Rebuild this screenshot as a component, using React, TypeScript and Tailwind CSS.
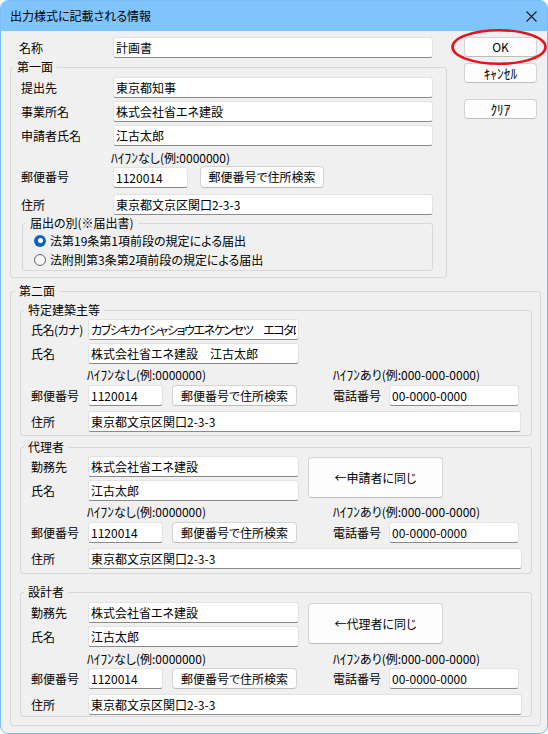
import React from "react";

const inp =
  "box-border h-[21px] bg-white border border-[#e2e2e2] border-b-[#8a8a8a] rounded-[3px] px-[2px] text-[12px] leading-[19px] text-black outline-none";
const btn =
  "box-border bg-[#fdfdfd] border border-[#d3d3d3] border-b-[#bdbdbd] rounded-[4px] text-[12px] leading-[16px] text-black flex items-center justify-center whitespace-nowrap";
const fs = "border border-[#d8d8d8] rounded-[3px] min-w-0";

function Input({ value, className }: { value: string; className: string }) {
  return <input readOnly value={value} className={`${inp} ${className}`} />;
}

function Radio({ checked, label }: { checked: boolean; label: string }) {
  return (
    <div className="flex items-center h-[19px] pl-[11px]">
      {checked ? (
        <span className="w-[12px] h-[12px] rounded-full bg-[#0a64bf] flex items-center justify-center shrink-0">
          <span className="w-[5px] h-[5px] rounded-full bg-white" />
        </span>
      ) : (
        <span className="box-border w-[12px] h-[12px] rounded-full border border-[#666666] bg-[#f6f6f6] shrink-0" />
      )}
      <span className="ml-[4px] leading-[16px]">{label}</span>
    </div>
  );
}

function Row({
  label,
  value,
  labelW,
  inputW,
  className = "",
}: {
  label: string;
  value: string;
  labelW: string;
  inputW: string;
  className?: string;
}) {
  return (
    <div className={`flex items-center h-[21px] ${className}`}>
      <span className={`${labelW} shrink-0 leading-[16px] whitespace-nowrap`}>{label}</span>
      <Input value={value} className={inputW} />
    </div>
  );
}

function HK({ children }: { children: React.ReactNode }) {
  return <span className="text-[13.5px]">{children}</span>;
}

function Hints({ className = "" }: { className?: string }) {
  return (
    <div className={`flex h-[14px] leading-[14px] whitespace-nowrap ${className}`}>
      <span className="ml-[56px] w-[246px] shrink-0">
        <HK>ﾊｲﾌﾝ</HK>なし(例:0000000)
      </span>
      <span>
        <HK>ﾊｲﾌﾝ</HK>あり(例:000-000-0000)
      </span>
    </div>
  );
}

function PostRow({ className = "" }: { className?: string }) {
  return (
    <div className={`flex items-center h-[21px] ${className}`}>
      <span className="w-[57px] shrink-0 leading-[16px]">郵便番号</span>
      <Input value="1120014" className="w-[75px]" />
      <button className={`${btn} ml-[9px] w-[125px] h-[21px]`}>郵便番号で住所検索</button>
      <span className="ml-[36px] w-[56px] shrink-0 leading-[16px]">電話番号</span>
      <Input value="00-0000-0000" className="w-[130px]" />
    </div>
  );
}

function AddrRow({ className = "", w }: { className?: string; w: string }) {
  return (
    <div className={`flex items-center h-[21px] ${className}`}>
      <span className="w-[57px] shrink-0 leading-[16px]">住所</span>
      <Input value="東京都文京区関口2-3-3" className={w} />
    </div>
  );
}

function Party({
  legend,
  btnLabel,
  className,
  innerTop,
  hintTop,
  postTop,
  bottom,
}: {
  legend: string;
  btnLabel: string;
  className: string;
  innerTop: string;
  hintTop: string;
  postTop: string;
  bottom: string;
}) {
  return (
    <fieldset className={`${fs} w-[512px] ${className}`}>
      <legend className="ml-[3px] px-[4px] leading-[16px]">{legend}</legend>
      <div className={`pl-[10px] ${innerTop} ${bottom}`}>
        <div className="flex">
          <div className="flex flex-col">
            <Row label="勤務先" value="株式会社省エネ建設" labelW="w-[57px]" inputW="w-[211px]" />
            <Row label="氏名" value="江古太郎" labelW="w-[57px]" inputW="w-[211px]" className="mt-[3px]" />
          </div>
          <button className={`${btn} ml-[9px] mt-[1px] w-[135px] h-[41px]`}>{btnLabel}</button>
        </div>
        <Hints className={hintTop} />
        <PostRow className={postTop} />
        <AddrRow className="mt-[5px]" w="w-[434px]" />
      </div>
    </fieldset>
  );
}

export default function App() {
  return (
    <div className="w-[548px] h-[734px] bg-white">
      <div className="box-border w-[548px] h-[734px] flex flex-col border border-[#78bdf8] rounded-[8px] overflow-hidden bg-[#f0f0f0] font-['Noto_Sans_CJK_JP',sans-serif] text-[12px] text-black [font-feature-settings:'palt']">
        <div className="h-[30px] shrink-0 bg-[#7fc4fd] flex items-center pl-[9px] pr-[10px]">
          <span className="leading-[16px]">出力様式に記載される情報</span>
          <svg className="ml-auto" width="11" height="11" viewBox="0 0 11 11">
            <path d="M0.5 0.5 L10.5 10.5 M10.5 0.5 L0.5 10.5" stroke="#1b1b1b" strokeWidth="1.1" fill="none" />
          </svg>
        </div>

        <div className="flex-1 pl-[9px] pt-[6px]">
          <div className="flex">
            <div className="w-[437px] flex flex-col">
              <div className="flex items-center h-[21px]">
                <span className="w-[103px] pl-[9px] shrink-0 leading-[16px]">名称</span>
                <Input value="計画書" className="w-[320px]" />
              </div>
              <fieldset className={`${fs} mt-[1px]`}>
                <legend className="ml-[2px] px-[4px] leading-[16px]">第一面</legend>
                <div className="pl-[10px] pt-[2px] pb-[6px]">
                  <Row label="提出先" value="東京都知事" labelW="w-[92px]" inputW="w-[320px]" />
                  <Row label="事業所名" value="株式会社省エネ建設" labelW="w-[92px]" inputW="w-[320px]" className="mt-[3px]" />
                  <Row label="申請者氏名" value="江古太郎" labelW="w-[92px]" inputW="w-[320px]" className="mt-[3px]" />
                  <div className="mt-[4px] h-[14px] leading-[14px] pl-[90px] whitespace-nowrap">
                    <HK>ﾊｲﾌﾝ</HK>なし(例:0000000)
                  </div>
                  <div className="mt-[2px] flex items-center h-[22px]">
                    <span className="w-[92px] shrink-0 leading-[16px]">郵便番号</span>
                    <Input value="1120014" className="w-[75px]" />
                    <button className={`${btn} ml-[12px] w-[124px] h-[22px]`}>郵便番号で住所検索</button>
                  </div>
                  <Row label="住所" value="東京都文京区関口2-3-3" labelW="w-[92px]" inputW="w-[320px]" className="mt-[6px]" />
                  <fieldset className={`${fs} ml-[1px] w-[411px]`}>
                    <legend className="ml-[3px] px-[4px] leading-[16px]">届出の別(※届出書)</legend>
                    <div className="pb-[1px]">
                      <Radio checked label="法第19条第1項前段の規定による届出" />
                      <Radio checked={false} label="法附則第3条第2項前段の規定による届出" />
                    </div>
                  </fieldset>
                </div>
              </fieldset>
            </div>

            <div className="ml-[17px] w-[73px] flex flex-col">
              <div className="relative">
                <button className={`${btn} w-[73px] h-[20px] border-[#1c6fc4] border-b-[#1c6fc4]`}>OK</button>
                <svg className="absolute left-[-14px] top-[-9px] pointer-events-none" width="98" height="38" viewBox="0 0 98 38">
                  <ellipse cx="49" cy="19" rx="46.5" ry="16.8" fill="none" stroke="#e3141d" strokeWidth="2.6" />
                </svg>
              </div>
              <button className={`${btn} mt-[6px] w-[73px] h-[20px] text-[13.5px]`}>ｷｬﾝｾﾙ</button>
              <button className={`${btn} mt-[16px] w-[73px] h-[20px] text-[13.5px]`}>ｸﾘｱ</button>
            </div>
          </div>

          <fieldset className={`${fs} mt-[5px] w-[531px]`}>
            <legend className="ml-[4px] px-[4px] leading-[16px]">第二面</legend>
            <div className="pl-[9px] pt-[3px] pb-[8px]">
              <fieldset className={`${fs} w-[512px]`}>
                <legend className="ml-[3px] px-[4px] leading-[16px]">特定建築主等</legend>
                <div className="pl-[10px] pt-[1px] pb-[3px]">
                  <div className="flex items-center h-[21px]">
                    <span className="w-[57px] shrink-0 leading-[16px] whitespace-nowrap tracking-[-0.5px]">氏名(カナ)</span>
                    <Input
                      value="カブシキカイシャショウエネケンセツ　エコタロウ"
                      className="w-[211px] tracking-[-1.35px]"
                    />
                  </div>
                  <Row label="氏名" value="株式会社省エネ建設　江古太郎" labelW="w-[57px]" inputW="w-[211px]" className="mt-[3px]" />
                  <Hints className="mt-[3px]" />
                  <PostRow className="mt-[4px]" />
                  <AddrRow className="mt-[5px]" w="w-[433px]" />
                </div>
              </fieldset>

              <Party
                legend="代理者"
                btnLabel="←申請者に同じ"
                className="mt-[3px]"
                innerTop="pt-[1px]"
                hintTop="mt-[3px]"
                postTop="mt-[4px]"
                bottom="pb-[4px]"
              />
              <Party
                legend="設計者"
                btnLabel="←代理者に同じ"
                className="mt-[10px]"
                innerTop="pt-[2px]"
                hintTop="mt-[4px]"
                postTop="mt-[3px]"
                bottom="pb-[1px]"
              />
            </div>
          </fieldset>
        </div>
      </div>
    </div>
  );
}
